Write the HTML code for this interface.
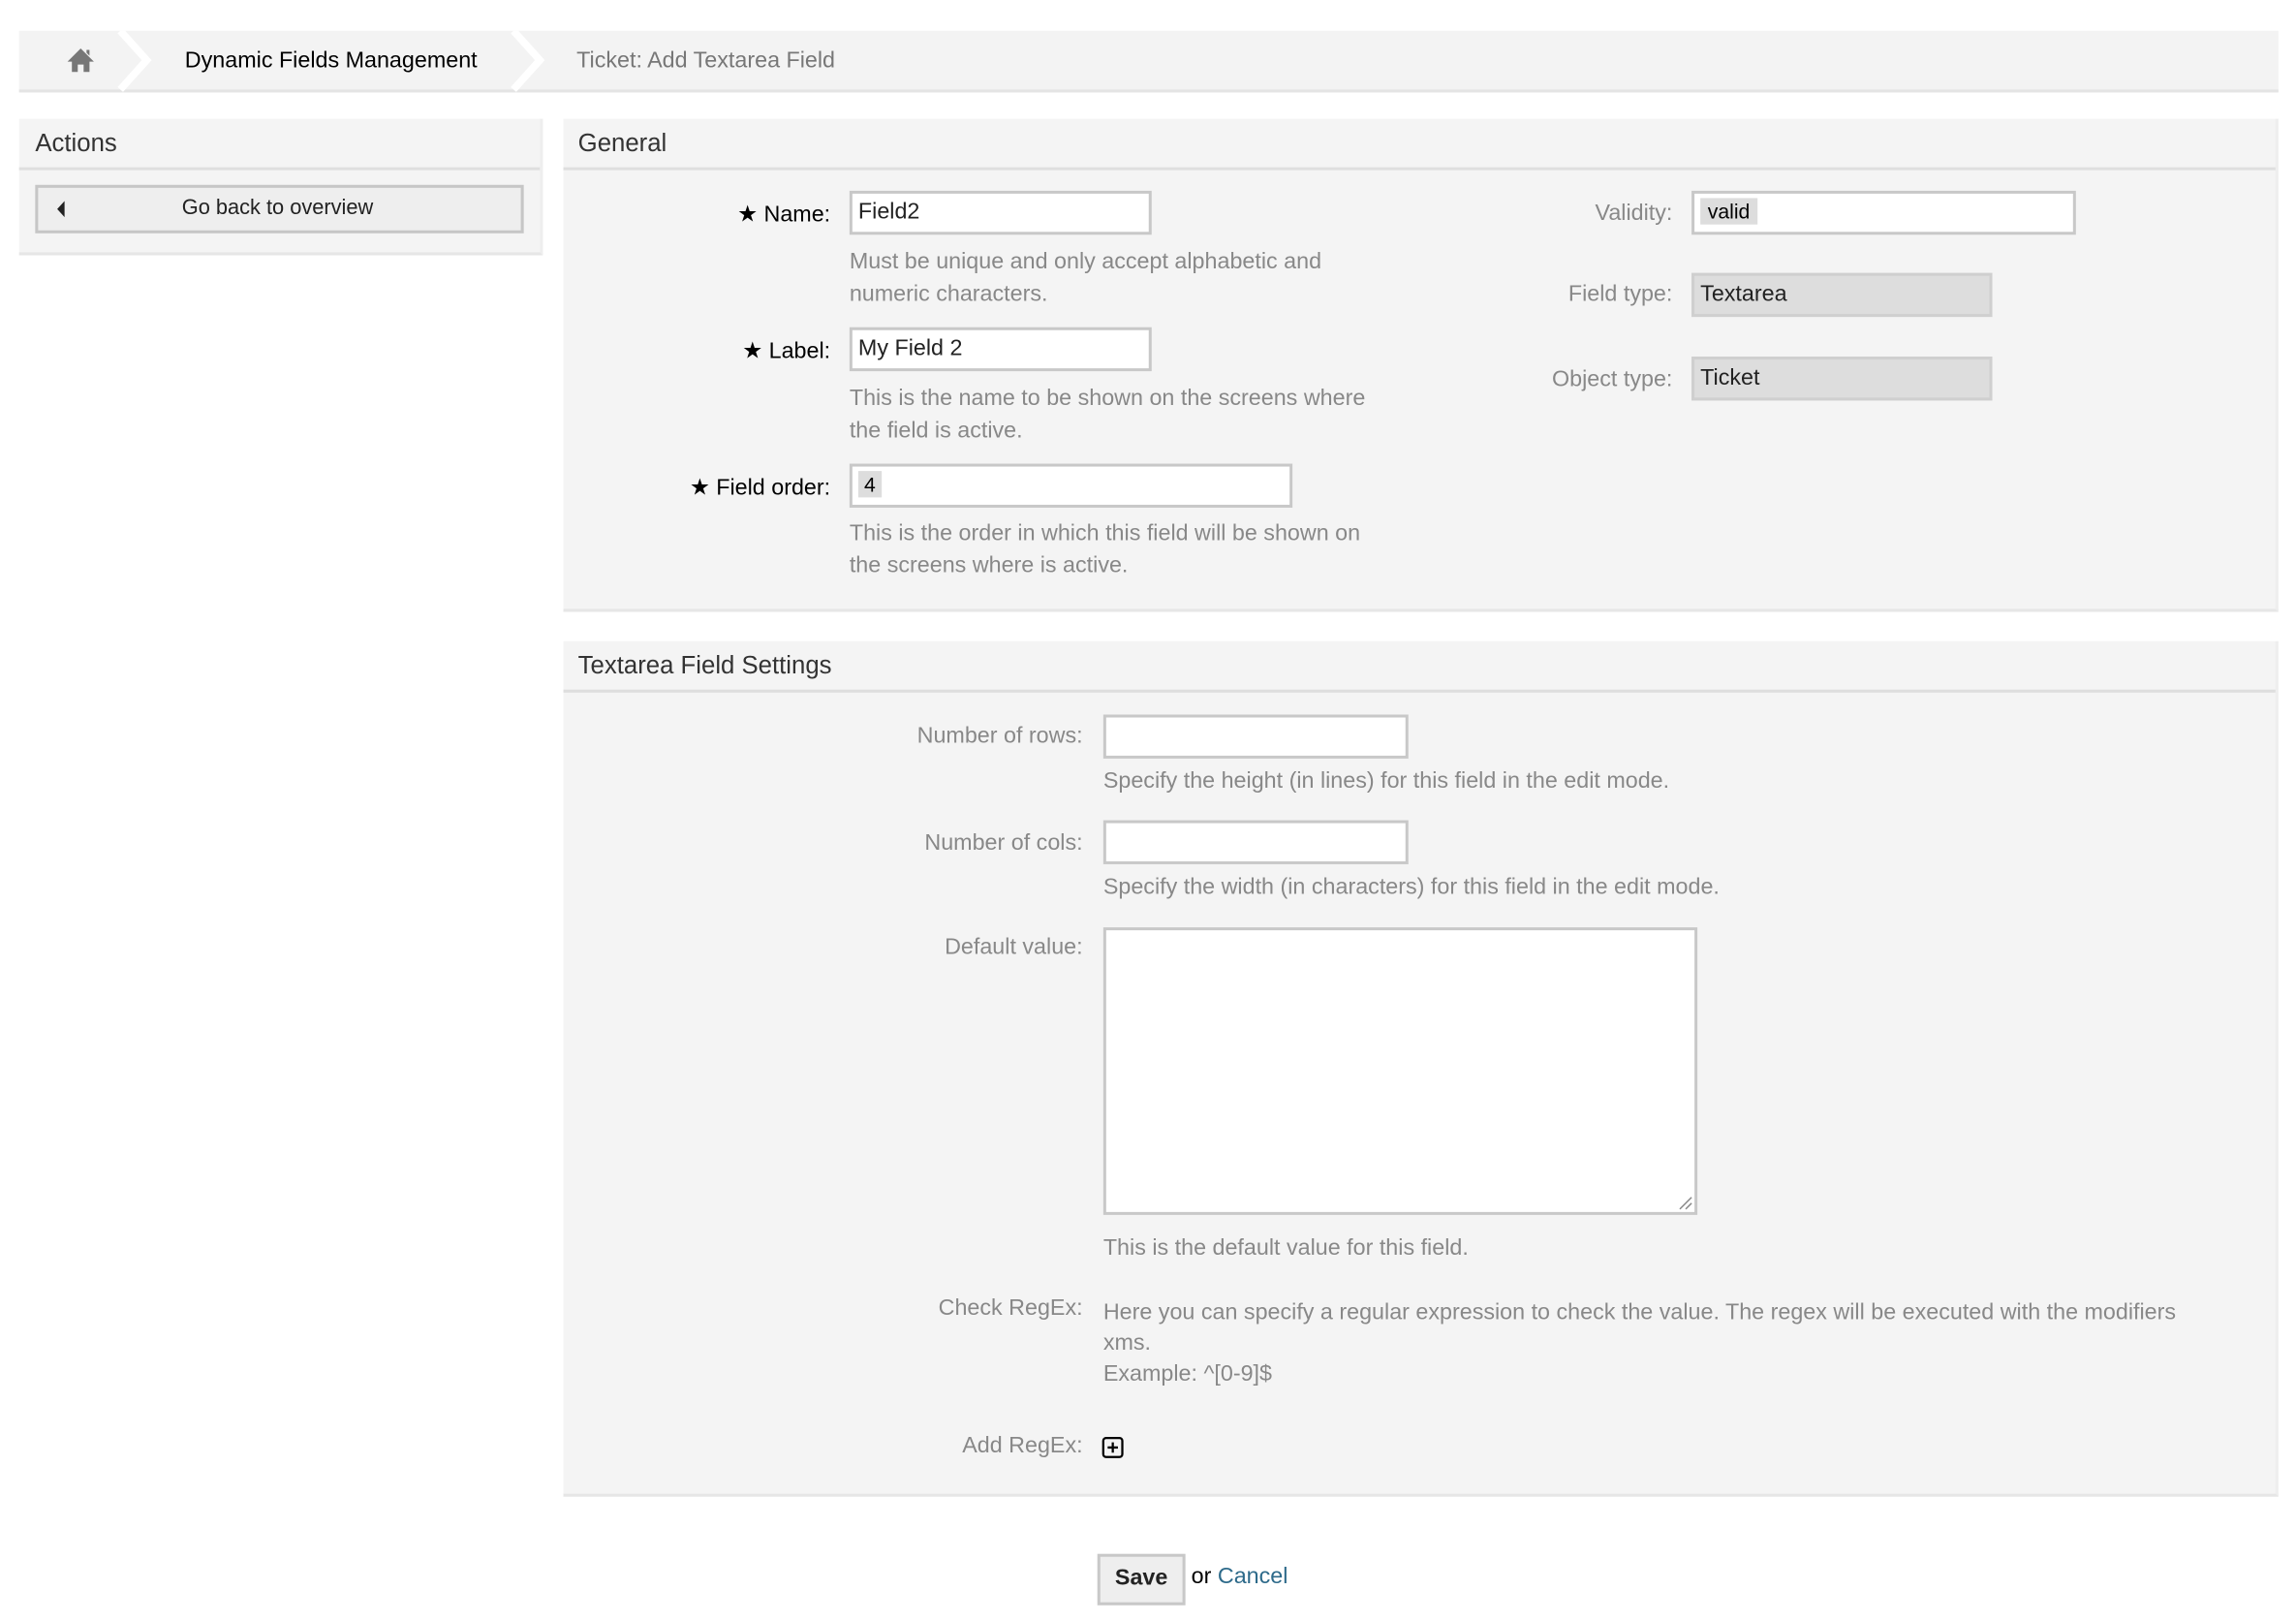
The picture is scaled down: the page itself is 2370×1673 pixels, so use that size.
<!DOCTYPE html>
<html><head><meta charset="utf-8"><style>
html,body{margin:0;padding:0;background:#fff;width:2370px;height:1673px;overflow:hidden}
#w{position:absolute;left:0;top:0;width:1565px;height:1105px;transform:scale(1.51438);transform-origin:0 0;font-family:"Liberation Sans",sans-serif;font-size:15.4px;color:#000}
.a{position:absolute;white-space:nowrap}
.box{position:absolute;background:#f4f4f4;border-bottom:2px solid #e6e6e6;border-right:2px solid #eee}
.hd{position:absolute;left:0;right:0;top:0;height:33px;border-bottom:2px solid #dedede}
.inp{position:absolute;background:#fff;border:2px solid #c8c8c8;box-sizing:border-box}
.ro{position:absolute;background:#ddd;border:2px solid #cfcfcf;box-sizing:border-box}
.g{color:#888}
.r{text-align:right}
</style></head><body><div id="w">
<div class="a" style="left:13px;top:21px;width:1540px;height:40px;background:#f3f3f3;border-bottom:2px solid #e4e4e4"></div>
<svg class="a" style="left:78px;top:21px" width="300" height="42"><polyline points="4,0 22,20 4,40" fill="none" stroke="#fff" stroke-width="5"/><polyline points="272,0 290,20 272,40" fill="none" stroke="#fff" stroke-width="5"/></svg>
<svg class="a" style="left:45px;top:32px" width="20" height="18" viewBox="0 0 20 18"><path d="M10 1 L1 10 H4 V17 H8 V12 H12 V17 H16 V10 H19 Z M14 2 H16 V6 L14 4Z" fill="#777"/></svg>
<div class="a" style="left:126px;top:33px">Dynamic Fields Management</div>
<div class="a" style="left:393px;top:33px;color:#777">Ticket: Add Textarea Field</div>

<div class="box" style="left:13px;top:81px;width:355px;height:91px"><div class="hd"></div></div>
<div class="a" style="left:24px;top:88px;font-size:17px;color:#333">Actions</div>
<div class="a" style="left:24px;top:126px;width:333px;height:33px;background:#eee;border:2px solid #c6c6c6;box-sizing:border-box"></div>
<svg class="a" style="left:38px;top:137px" width="8" height="11"><path d="M6 0 L1 5.5 L6 11Z" fill="#222"/></svg>
<div class="a" style="left:124px;top:134px;font-size:14.4px;color:#222">Go back to overview</div>

<div class="box" style="left:384px;top:81px;width:1167px;height:334px"><div class="hd"></div></div>
<div class="a" style="left:394px;top:88px;font-size:17px;color:#333">General</div>
<div class="a r" style="left:400px;width:166px;top:137px">★ Name:</div>
<div class="inp" style="left:579px;top:130px;width:206px;height:30px"></div>
<div class="a" style="left:585px;top:136px;color:#222">Field2</div>
<div class="a g" style="left:579px;top:168px;line-height:21.5px">Must be unique and only accept alphabetic and<br>numeric characters.</div>
<div class="a r" style="left:400px;width:166px;top:230px">★ Label:</div>
<div class="inp" style="left:579px;top:223px;width:206px;height:30px"></div>
<div class="a" style="left:585px;top:229px;color:#222">My Field 2</div>
<div class="a g" style="left:579px;top:261px;line-height:21.5px">This is the name to be shown on the screens where<br>the field is active.</div>
<div class="a r" style="left:400px;width:166px;top:323px">★ Field order:</div>
<div class="inp" style="left:579px;top:316px;width:302px;height:30px"></div>
<div class="a" style="left:585px;top:321px;background:#ddd;padding:1px 4px;font-size:14px">4</div>
<div class="a g" style="left:579px;top:353px;line-height:21.5px">This is the order in which this field will be shown on<br>the screens where is active.</div>

<div class="a r g" style="left:950px;width:190px;top:137px">Validity:</div>
<div class="inp" style="left:1153px;top:130px;width:262px;height:30px"></div>
<div class="a" style="left:1159px;top:135px;background:#ddd;padding:1px 5px;font-size:14px">valid</div>
<div class="a r g" style="left:950px;width:190px;top:192px">Field type:</div>
<div class="ro" style="left:1153px;top:186px;width:205px;height:30px"></div>
<div class="a" style="left:1159px;top:192px;color:#222">Textarea</div>
<div class="a r g" style="left:950px;width:190px;top:250px">Object type:</div>
<div class="ro" style="left:1153px;top:243px;width:205px;height:30px"></div>
<div class="a" style="left:1159px;top:249px;color:#222">Ticket</div>

<div class="box" style="left:384px;top:437px;width:1167px;height:581px"><div class="hd"></div></div>
<div class="a" style="left:394px;top:444px;font-size:17px;color:#333">Textarea Field Settings</div>
<div class="a r g" style="left:500px;width:238px;top:493px">Number of rows:</div>
<div class="inp" style="left:752px;top:487px;width:208px;height:30px"></div>
<div class="a g" style="left:752px;top:524px">Specify the height (in lines) for this field in the edit mode.</div>
<div class="a r g" style="left:500px;width:238px;top:566px">Number of cols:</div>
<div class="inp" style="left:752px;top:559px;width:208px;height:30px"></div>
<div class="a g" style="left:752px;top:596px">Specify the width (in characters) for this field in the edit mode.</div>
<div class="a r g" style="left:500px;width:238px;top:637px">Default value:</div>
<div class="inp" style="left:752px;top:632px;width:405px;height:196px"></div>
<svg class="a" style="left:1144px;top:815px" width="10" height="10"><path d="M9 1 L1 9 M9 5 L5 9" stroke="#888" stroke-width="1"/></svg>
<div class="a g" style="left:752px;top:842px">This is the default value for this field.</div>
<div class="a r g" style="left:500px;width:238px;top:883px">Check RegEx:</div>
<div class="a g" style="left:752px;top:884px;line-height:21px">Here you can specify a regular expression to check the value. The regex will be executed with the modifiers<br>xms.<br>Example: ^[0-9]$</div>
<div class="a r g" style="left:500px;width:238px;top:977px">Add RegEx:</div>
<svg class="a" style="left:751px;top:979px" width="16" height="16"><rect x="1" y="1" width="13" height="13" rx="2" fill="none" stroke="#000" stroke-width="1.5"/><path d="M7.5 4 V11 M4 7.5 H11" stroke="#000" stroke-width="1.5"/></svg>

<div class="a" style="left:748px;top:1059px;width:60px;height:35px;background:#eee;border:2px solid #c8c8c8;box-sizing:border-box"></div>
<div class="a" style="left:760px;top:1067px;font-weight:bold;color:#222">Save</div>
<div class="a" style="left:812px;top:1066px">or <span style="color:#2d6a8a">Cancel</span></div>
</div></body></html>
